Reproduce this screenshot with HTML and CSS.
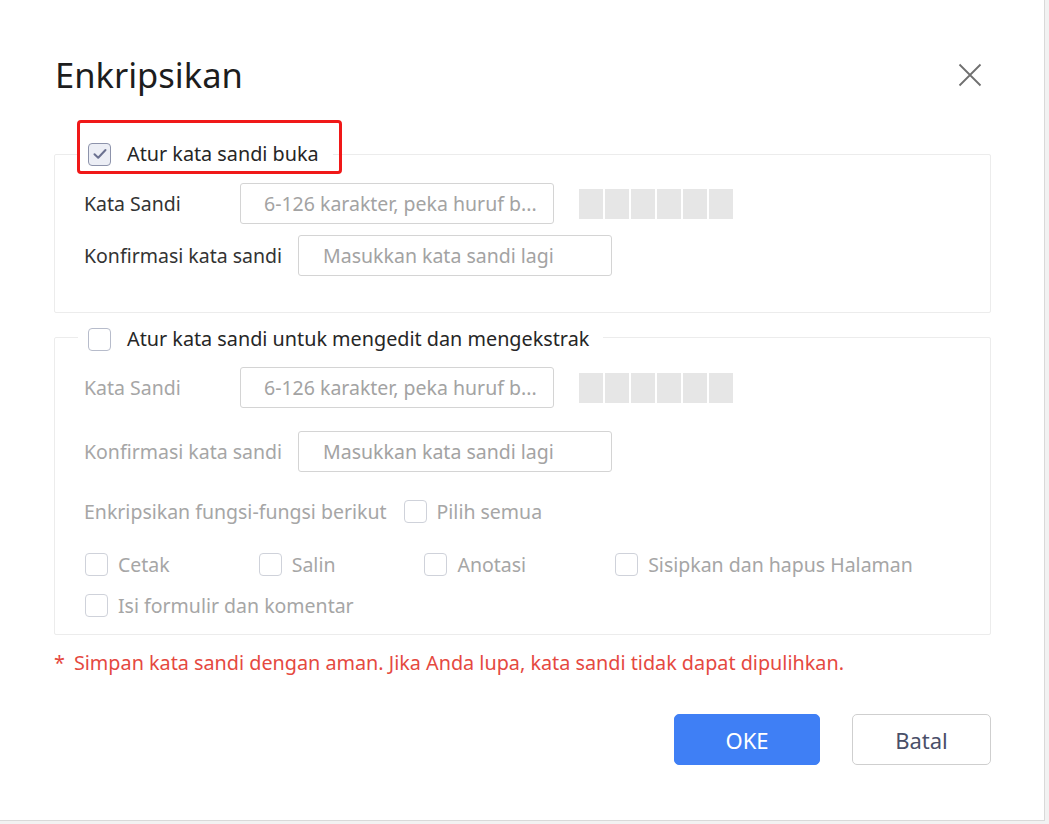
FILE: index.html
```html
<!DOCTYPE html>
<html lang="id">
<head>
<meta charset="utf-8">
<title>Enkripsikan</title>
<link rel="stylesheet" href="styles.css">
</head>
<body>
<div class="dialog">
  <div class="header">
    <h1 class="title">Enkripsikan</h1>
    <button class="close" aria-label="Tutup">
      <svg width="24" height="24" viewBox="0 0 24 24"><path d="M1.5 1.5 L22.5 22.5 M22.5 1.5 L1.5 22.5" stroke="#6f6f6f" stroke-width="1.8" fill="none"/></svg>
    </button>
  </div>

  <fieldset class="group group-open">
    <legend class="legend">
      <span class="cb cb-checked">
        <svg width="14" height="12" viewBox="0 0 14 12"><path d="M1.5 6.2 L5.2 9.8 L12.5 2" stroke="#6b7190" stroke-width="2" fill="none" stroke-linecap="round" stroke-linejoin="round"/></svg>
      </span>
      <span class="legend-text">Atur kata sandi buka</span>
      <span class="highlight"></span>
    </legend>
    <div class="row">
      <span class="label">Kata Sandi</span>
      <div class="input"><span class="ph">6-126 karakter, peka huruf b...</span></div>
      <div class="strength"><i></i><i></i><i></i><i></i><i></i><i></i></div>
    </div>
    <div class="row row-gap-sm">
      <span class="label">Konfirmasi kata sandi</span>
      <div class="input input-confirm"><span class="ph">Masukkan kata sandi lagi</span></div>
    </div>
  </fieldset>

  <fieldset class="group group-edit">
    <legend class="legend legend-edit">
      <span class="cb"></span>
      <span class="legend-text">Atur kata sandi untuk mengedit dan mengekstrak</span>
    </legend>
    <div class="row">
      <span class="label muted">Kata Sandi</span>
      <div class="input"><span class="ph">6-126 karakter, peka huruf b...</span></div>
      <div class="strength"><i></i><i></i><i></i><i></i><i></i><i></i></div>
    </div>
    <div class="row row-gap-lg">
      <span class="label muted">Konfirmasi kata sandi</span>
      <div class="input input-confirm"><span class="ph">Masukkan kata sandi lagi</span></div>
    </div>
    <div class="funcs">
      <span class="muted">Enkripsikan fungsi-fungsi berikut</span>
      <label class="opt opt-all"><span class="cb cb-dis"></span><span class="muted">Pilih semua</span></label>
    </div>
    <div class="opts">
      <label class="opt"><span class="cb cb-dis"></span><span class="muted">Cetak</span></label>
      <label class="opt"><span class="cb cb-dis"></span><span class="muted">Salin</span></label>
      <label class="opt"><span class="cb cb-dis"></span><span class="muted">Anotasi</span></label>
      <label class="opt"><span class="cb cb-dis"></span><span class="muted">Sisipkan dan hapus Halaman</span></label>
    </div>
    <div class="opts opts-last">
      <label class="opt"><span class="cb cb-dis"></span><span class="muted">Isi formulir dan komentar</span></label>
    </div>
  </fieldset>

  <p class="note"><span class="star">*</span>Simpan kata sandi dengan aman. Jika Anda lupa, kata sandi tidak dapat dipulihkan.</p>

  <div class="actions">
    <button class="btn btn-primary">OKE</button>
    <button class="btn btn-default">Batal</button>
  </div>
</div>
</body>
</html>
```

FILE: styles.css
```css
html, body {
  margin: 0;
  padding: 0;
}
body {
  background: #f2f2f2;
  font-family: "Noto Sans", "Open Sans", sans-serif;
  color: #333;
  width: 1049px;
  height: 824px;
  overflow: hidden;
}
.dialog {
  box-sizing: border-box;
  width: 1045px;
  height: 821px;
  background: #fff;
  border-right: 1px solid #d9d9d9;
  border-bottom: 1px solid #d9d9d9;
  padding: 53px 53px 0 54px;
}
.header {
  display: flex;
  justify-content: space-between;
  align-items: center;
  height: 44px;
}
.title {
  margin: 0 0 0 1px;
  font-size: 34.5px;
  font-weight: 400;
  color: #1d1d1d;
  line-height: 44px;
}
.close {
  width: 44px;
  height: 44px;
  border: 0;
  background: transparent;
  padding: 0;
  display: flex;
  align-items: center;
  justify-content: center;
  margin-right: -1px;
}
.group {
  margin: 45px 0 0 0;
  border: 1px solid #ececec;
  border-radius: 2px;
  padding: 17px 20px 36px 29px;
  min-width: 0;
}
.group-edit {
  margin-top: 14px;
  padding-top: 20px;
  padding-bottom: 17px;
}
.legend {
  position: relative;
  margin-left: -6px;
  padding: 0 14px 0 10px;
  display: flex;
  align-items: center;
  height: 24px;
}
.legend-edit {
  height: 20px;
  align-items: flex-start;
}
.legend-edit .cb {
  margin-top: 1px;
}
.legend-edit .legend-text {
  margin-top: 0;
}
.legend-text {
  font-size: 19.8px;
  color: #262626;
  margin-left: 16px;
  line-height: 24px;
  white-space: nowrap;
}
.highlight {
  position: absolute;
  left: -1px;
  top: -22px;
  width: 259px;
  height: 48px;
  border: 3px solid #f01818;
  border-radius: 4px;
}
.cb {
  box-sizing: border-box;
  width: 23px;
  height: 23px;
  border: 1.5px solid #b7bccb;
  border-radius: 4px;
  background: #fff;
  display: inline-flex;
  align-items: center;
  justify-content: center;
  flex: none;
}
.cb-checked {
  border-color: #8d93ab;
  background: #eceef5;
}
.cb-dis {
  border-color: #cfd2da;
}
.row {
  display: flex;
  align-items: center;
  height: 41px;
}
.row-gap-sm { margin-top: 11px; }
.row-gap-lg { margin-top: 23px; }
.label {
  font-size: 19.5px;
  min-width: 140px;
  margin-right: 16px;
  color: #333;
  white-space: nowrap;
}
.muted {
  color: #a6a6a6;
}
.input {
  box-sizing: border-box;
  width: 314px;
  height: 41px;
  border: 1px solid #d4d4d4;
  border-radius: 3px;
  display: flex;
  align-items: center;
  padding-left: 23px;
  flex: none;
}
.input-confirm {
  padding-left: 24px;
}
.ph {
  font-size: 19.5px;
  color: #a3a3a3;
  white-space: nowrap;
}
.strength {
  display: flex;
  gap: 2px;
  margin-left: 25px;
}
.strength i {
  width: 24px;
  height: 30px;
  background: #e6e6e6;
}
.funcs {
  display: flex;
  align-items: center;
  font-size: 19.5px;
  margin-top: 27px;
  height: 24px;
  white-space: nowrap;
}
.opt {
  display: flex;
  align-items: center;
  gap: 10px;
  font-size: 19.5px;
  height: 24px;
  white-space: nowrap;
}
.opt-all {
  margin-left: 17px;
}
.opts {
  display: flex;
  gap: 89px;
  margin-top: 29px;
  margin-left: 1px;
}
.opts-last {
  margin-top: 17px;
}
.note {
  margin: 16px 0 0 0;
  font-size: 19.8px;
  line-height: 24px;
  color: #e5493f;
  white-space: nowrap;
}
.star {
  margin-right: 9px;
}
.actions {
  display: flex;
  justify-content: flex-end;
  gap: 32px;
  margin-top: 39px;
}
.btn {
  height: 51px;
  border-radius: 5px;
  font-family: inherit;
  font-size: 22px;
  cursor: pointer;
}
.btn-primary {
  width: 146px;
  background: #3f7ff5;
  border: 1px solid #3f7ff5;
  color: #fff;
}
.btn-default {
  width: 139px;
  background: #fff;
  border: 1px solid #cfcfcf;
  color: #4a4f68;
}
```
